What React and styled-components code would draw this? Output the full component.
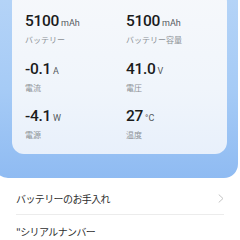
import React from 'react';
import styled, { createGlobalStyle } from 'styled-components';

const GlobalStyle = createGlobalStyle`
  html, body {
    margin: 0;
    padding: 0;
    background: #ffffff;
    overflow: hidden;
  }
  body {
    font-family: Roboto, 'Noto Sans CJK JP', sans-serif;
  }
`;

const Page = styled.div`
  width: 240px;
  height: 240px;
  overflow: hidden;
  background: #ffffff;
`;

const BlueCard = styled.div`
  margin: -20px 2px 0 -6px;
  padding: 10px 11px 24px 18px;
  border-radius: 0 0 14px 14px;
  background: linear-gradient(180deg, #b7d5f7 0%, #a6cbf6 55%, #8fbbf2 100%);
`;

const StatsCard = styled.div`
  border-radius: 12px;
  padding: 22px 10px 14px 13px;
  background: linear-gradient(180deg, #f6f8fb 0%, #f0f5fb 60%, #e8f0fb 100%);
  display: grid;
  grid-template-columns: 101px 1fr;
  row-gap: 14.5px;
`;

const Stat = styled.div`
  display: flex;
  flex-direction: column;
`;

const Value = styled.div`
  font-family: Roboto, sans-serif;
  font-weight: 500;
  font-size: 15.5px;
  line-height: 18px;
  letter-spacing: -0.3px;
  color: #1b1b1b;
`;

const Unit = styled.span`
  font-family: Roboto, sans-serif;
  font-weight: 400;
  font-size: 9px;
  letter-spacing: 0;
  margin-left: 2px;
  color: #555a60;
`;

const Label = styled.div`
  margin-top: 2px;
  font-family: 'Noto Sans CJK JP', sans-serif;
  font-size: 8px;
  line-height: 11px;
  color: #8d9196;
`;

const List = styled.div`
  margin-top: 4px;
  padding: 0 16px;
`;

const Item = styled.div`
  height: 32px;
  display: flex;
  align-items: center;
  justify-content: space-between;
  border-bottom: ${(p) => (p.$divider ? '1px solid #ececec' : 'none')};
  font-family: 'Noto Sans CJK JP', sans-serif;
  font-size: 10px;
  letter-spacing: -0.6px;
  color: #2e2e2e;
`;

function Chevron() {
  return (
    <svg width="6" height="9" viewBox="0 0 6 9" fill="none" stroke="#c4c4c4" strokeWidth="1" strokeLinecap="round" strokeLinejoin="round">
      <polyline points="1 0.8 5 4.5 1 8.2" />
    </svg>
  );
}

const stats = [
  { value: '5100', unit: 'mAh', label: 'バッテリー' },
  { value: '5100', unit: 'mAh', label: 'バッテリー容量' },
  { value: '-0.1', unit: 'A', label: '電流' },
  { value: '41.0', unit: 'V', label: '電圧' },
  { value: '-4.1', unit: 'W', label: '電源' },
  { value: '27', unit: '°C', label: '温度' },
];

export default function App() {
  return (
    <Page>
      <GlobalStyle />
      <BlueCard>
        <StatsCard>
          {stats.map((s, i) => (
            <Stat key={i}>
              <Value>
                {s.value}
                <Unit>{s.unit}</Unit>
              </Value>
              <Label>{s.label}</Label>
            </Stat>
          ))}
        </StatsCard>
      </BlueCard>
      <List>
        <Item $divider>
          バッテリーのお手入れ
          <Chevron />
        </Item>
        <Item>"シリアルナンバー</Item>
      </List>
    </Page>
  );
}
